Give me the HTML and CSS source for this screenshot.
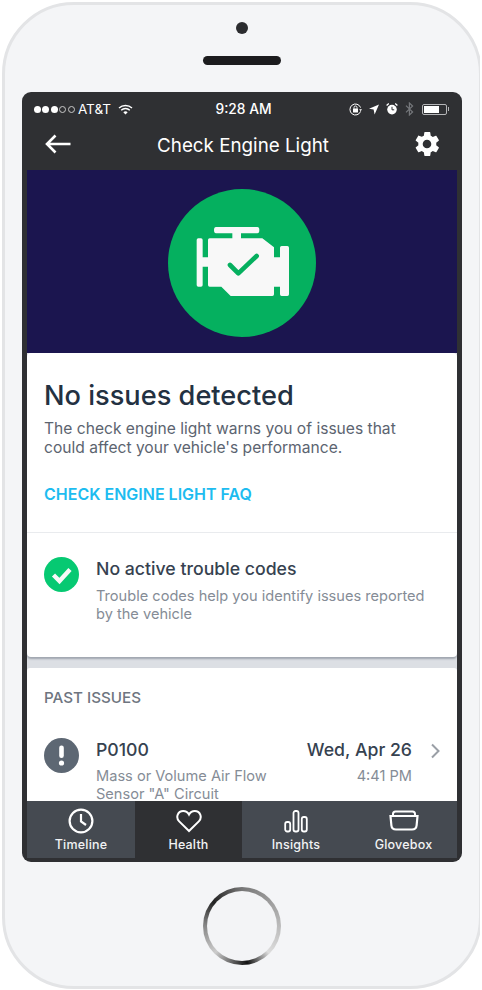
FILE: index.html
```html
<!DOCTYPE html>
<html lang="en-US">
<head>
    <meta charset="utf-8" />
    <title>Check Engine Light</title>
    <link rel="stylesheet" href="styles.css">
</head>
<body>
<div class="phone">
    <div class="camera"></div>
    <div class="speaker"></div>

    <div class="screen">
        <div class="statusbar">
            <div class="status-left">
                <span class="dot"></span><span class="dot"></span><span class="dot"></span><span class="dot hollow"></span><span class="dot hollow"></span>
                <span class="carrier">AT&amp;T</span>
                <svg class="wifi" width="15" height="11" viewBox="0 0 15 11">
                    <path d="M1 4 A9.5 9.5 0 0 1 14 4" fill="none" stroke="#fff" stroke-width="1.4"/>
                    <path d="M3.2 6.2 A6.2 6.2 0 0 1 11.8 6.2" fill="none" stroke="#fff" stroke-width="1.4"/>
                    <path d="M5.3 8.2 A3.2 3.2 0 0 1 9.7 8.2 L7.5 10.6 Z" fill="#fff"/>
                </svg>
            </div>
            <div class="status-time">9:28 AM</div>
            <div class="status-right">
                <svg width="13" height="13" viewBox="0 0 13 13">
                    <path d="M11.6 8.4 A5.5 5.5 0 1 1 11.6 4.6" fill="none" stroke="#fff" stroke-width="1"/>
                    <path d="M10.2 6.2 L13 6.2 L11.6 8.2 Z" fill="#fff"/>
                    <rect x="4" y="5.6" width="5" height="3.8" rx="0.5" fill="#fff"/>
                    <path d="M5 5.8 V4.5 A1.5 1.5 0 0 1 8 4.5 V5.8" fill="none" stroke="#fff" stroke-width="0.9"/>
                </svg>
                <svg width="10" height="11" viewBox="0 0 10 11">
                    <path d="M10 0.5 L5.6 10.5 L4.6 5.6 L0 4.8 Z" fill="#fff"/>
                </svg>
                <svg width="12" height="12" viewBox="0 0 12 12">
                    <circle cx="6" cy="6.6" r="4.8" fill="#fff"/>
                    <path d="M6 3.8 V6.8 H8.2" fill="none" stroke="#2f3033" stroke-width="1"/>
                    <path d="M0.6 2.6 L2.8 0.6 M11.4 2.6 L9.2 0.6" stroke="#fff" stroke-width="1.3"/>
                </svg>
                <svg width="9" height="14" viewBox="0 0 9 14">
                    <path d="M1 3.6 L7.6 10 L4.4 13 V1 L7.6 4 L1 10.4" fill="none" stroke="#75777b" stroke-width="1.2"/>
                </svg>
                <div class="battery"><div class="battery-level"></div></div>
            </div>
        </div>

        <div class="navbar">
            <svg class="nav-back" width="26" height="20" viewBox="0 0 26 20">
                <path d="M25.5 10 H2 M10.5 1.5 L2 10 L10.5 18.5" fill="none" stroke="#fff" stroke-width="2.6"/>
            </svg>
            <div class="nav-title">Check Engine Light</div>
            <svg class="nav-gear" width="24" height="24" viewBox="0 0 24 24">
                <path fill="#fff" fill-rule="evenodd" d="M21.2 13.2c.05-.4.08-.8.08-1.2s-.03-.8-.08-1.2l2.5-2c.23-.18.29-.5.14-.76l-2.4-4.1c-.14-.26-.46-.36-.72-.26l-3 1.2c-.62-.48-1.3-.88-2-1.18L15.27.5c-.05-.29-.3-.5-.59-.5H9.9c-.3 0-.54.21-.59.5l-.45 3.18c-.72.3-1.39.7-2 1.18l-3-1.2c-.27-.1-.58 0-.73.26L.74 8.04c-.15.26-.09.58.14.76l2.5 2c-.05.4-.09.8-.09 1.2s.04.8.09 1.2l-2.5 2c-.23.18-.29.5-.14.76l2.39 4.1c.15.26.46.36.73.26l3-1.2c.61.48 1.28.88 2 1.18l.45 3.18c.05.29.29.5.59.5h4.78c.3 0 .54-.21.59-.5l.45-3.18c.71-.3 1.38-.7 2-1.18l3 1.2c.26.1.58 0 .72-.26l2.4-4.1c.15-.26.09-.58-.14-.76zM12 16.3a4.3 4.3 0 1 1 0-8.6 4.3 4.3 0 0 1 0 8.6z"/>
            </svg>
        </div>

        <div class="content">
            <div class="hero">
                <svg width="148" height="148" viewBox="52 57 444 444">
                    <circle cx="274" cy="279" r="222" fill="#05b05f"/>
                    <path fill="#f8f8f8" d="M196 171 H320 Q326 171 326 180 Q326 190 320 190 H271 V205 H335 L370 232 V262 H388 V233 Q388 228 393 228 H410 Q415 228 415 233 V373 Q415 378 410 378 H393 Q388 378 388 373 V350 H370 V373 Q370 378 365 378 H240 L212 350 H177 Q172 350 172 345 V290 H156 V345 Q156 350 151 350 H143 Q138 350 138 345 V210 Q138 205 143 205 H151 Q156 205 156 210 V262 H172 V210 Q172 205 177 205 H245 V190 H196 Q190 190 190 180 Q190 171 196 171 Z"/>
                    <path d="M238 285 L263 310 L318 258" fill="none" stroke="#05b05f" stroke-width="14" stroke-linecap="round" stroke-linejoin="round"/>
                </svg>
            </div>

            <div class="card">
                <div class="card-top">
                    <h1 class="title">No issues detected</h1>
                    <p class="intro">The check engine light warns you of issues that could affect your vehicle's performance.</p>
                    <a class="faq">CHECK ENGINE LIGHT FAQ</a>
                </div>
                <div class="row status-row">
                    <svg class="row-icon" width="35" height="35" viewBox="0 0 35 35">
                        <circle cx="17.5" cy="17.5" r="17.5" fill="#06c972"/>
                        <path d="M9.5 18 L15.5 24 L26 12.5" fill="none" stroke="#f8f8f8" stroke-width="4.4"/>
                    </svg>
                    <div class="row-text">
                        <div class="row-title">No active trouble codes</div>
                        <div class="row-desc">Trouble codes help you identify issues reported by the vehicle</div>
                    </div>
                </div>
            </div>

            <div class="past">
                <div class="past-label">PAST ISSUES</div>
                <div class="row issue-row">
                    <svg class="row-icon" width="35" height="35" viewBox="0 0 35 35">
                        <circle cx="17.5" cy="17.5" r="17.5" fill="#5d6773"/>
                        <rect x="15.2" y="7.5" width="4.6" height="12.5" rx="2.2" fill="#fff"/>
                        <circle cx="17.5" cy="25" r="2.6" fill="#fff"/>
                    </svg>
                    <div class="row-text issue-text">
                        <div class="row-title">P0100</div>
                        <div class="row-desc">Mass or Volume Air Flow Sensor "A" Circuit</div>
                    </div>
                    <div class="issue-date">
                        <div class="row-title">Wed, Apr 26</div>
                        <div class="row-desc">4:41 PM</div>
                    </div>
                    <svg class="chevron" width="11" height="16" viewBox="0 0 11 16">
                        <path d="M3 1.5 L9.5 8 L3 14.5" fill="none" stroke="#9a9fa6" stroke-width="2"/>
                    </svg>
                </div>
            </div>
        </div>

        <div class="tabbar">
            <div class="tab">
                <svg width="26" height="26" viewBox="0 0 26 26">
                    <circle cx="13" cy="13" r="11.4" fill="none" stroke="#fff" stroke-width="2.2"/>
                    <path d="M13 6 V13.5 L18 17" fill="none" stroke="#fff" stroke-width="2.2"/>
                </svg>
                <span>Timeline</span>
            </div>
            <div class="tab active">
                <svg width="26" height="26" viewBox="0 0 26 26">
                    <path d="M13 23 L3.2 13.4 C-0.8 9 2 3 7.2 3 C9.8 3 11.8 4.4 13 6.6 C14.2 4.4 16.2 3 18.8 3 C24 3 26.8 9 22.8 13.4 Z" fill="none" stroke="#fff" stroke-width="2"/>
                </svg>
                <span>Health</span>
            </div>
            <div class="tab">
                <svg width="26" height="26" viewBox="0 0 26 26">
                    <rect x="2.2" y="14" width="5" height="9.5" rx="2" fill="none" stroke="#fff" stroke-width="1.8"/>
                    <rect x="10.5" y="3" width="5" height="20.5" rx="2" fill="none" stroke="#fff" stroke-width="1.8"/>
                    <rect x="18.8" y="9" width="5" height="14.5" rx="2" fill="none" stroke="#fff" stroke-width="1.8"/>
                </svg>
                <span>Insights</span>
            </div>
            <div class="tab">
                <svg width="30" height="26" viewBox="0 0 30 26">
                    <path d="M1.5 8 H28.5 L27.6 17.5 Q27.2 21.5 23 21.5 H7 Q2.8 21.5 2.4 17.5 Z" fill="none" stroke="#fff" stroke-width="2.2"/>
                    <path d="M4 7.5 V6 Q4 3.5 6.5 3.5 H23.5 Q26 3.5 26 6 V7.5" fill="none" stroke="#fff" stroke-width="2"/>
                </svg>
                <span>Glovebox</span>
            </div>
        </div>
    </div>

    <div class="home"><div class="home-inner"></div></div>
</div>
</body>
</html>
```

FILE: styles.css
```css
* {box-sizing: border-box;}
body {margin: 2px; font-family: "Inter", "Liberation Sans", sans-serif; background: #fff;}
h1, p {margin: 0;}

.phone {width: 480px; height: 987px; border: 3px solid #e3e4e6; border-radius: 72px; background: #f4f5f7; padding-top: 17px; display: flex; flex-direction: column; align-items: center;}
.camera {width: 12px; height: 12px; border-radius: 50%; background: #2b2c2f;}
.speaker {width: 78px; height: 9px; border-radius: 5px; background: #1c1c1e; margin-top: 22px;}
.home {width: 78px; height: 78px; border-radius: 50%; margin-top: 25px; padding: 4px; background: conic-gradient(#777 0deg, #bbb 90deg, #ddd 135deg, #111 172deg, #ccc 225deg, #888 270deg, #222 310deg, #777 360deg);}
.home-inner {width: 100%; height: 100%; border-radius: 50%; background: #f3f4f6;}

.screen {width: 440px; height: 770px; margin-top: 27px; background: #2f3033; border-radius: 9px; padding: 0 5px 4px; display: flex; flex-direction: column; overflow: hidden;}

.statusbar {height: 32px; padding: 2px 10px 0 7px; display: grid; grid-template-columns: 1fr auto 1fr; align-items: center; color: #fff; font-size: 13px;}
.status-left {display: flex; align-items: center;}
.dot {width: 7px; height: 7px; border-radius: 50%; background: #fff; margin-right: 1.4px;}
.dot.hollow {background: none; border: 1px solid #c9c9c9;}
.carrier {margin-left: 2px; font-size: 13.5px;}
.wifi {margin-left: 7px;}
.status-time {font-weight: 500; font-size: 13.8px; margin-left: 6px;}
.status-right {display: flex; align-items: center; justify-content: flex-end; gap: 7px;}
.battery {width: 25px; height: 11px; border: 1px solid #b5b6b8; border-radius: 2px; padding: 1px; position: relative; margin-left: 1px;}
.battery:after {content: ""; position: absolute; right: -3px; top: 2px; width: 1px; height: 4px; background: #b5b6b8;}
.battery-level {width: 15px; height: 100%; background: #fff;}

.navbar {height: 46px; display: flex; align-items: center; justify-content: space-between; padding: 0 18px 6px 18px;}
.nav-title {color: #fff; font-size: 18.8px; margin-top: 2px;}

.content {height: 631px; overflow: hidden; background: #dcdfe4;}
.hero {height: 183px; padding-top: 19px; background: #1b154f; display: flex; justify-content: center;}
.card {height: 304px; background: #fff; border-radius: 4px; box-shadow: 0 2px 2px rgba(70, 80, 95, 0.4);}
.card-top {padding: 24px 17px 28px; border-bottom: 1px solid #e9ebee;}
.title {font-size: 27.2px; font-weight: 500; line-height: 38px; color: #233142;}
.intro {font-size: 15.6px; line-height: 19px; color: #5c6470; margin-top: 4px;}
.faq {display: block; margin-top: 27px; font-size: 16px; font-weight: 600; line-height: 20px; color: #1dbcf0;}

.row {display: flex; padding: 0 17px;}
.row-icon {flex: none;}
.row-text {margin-left: 17px;}
.row-title {font-size: 17.7px; font-weight: 500; line-height: 24px; color: #364250;}
.row-desc {font-size: 14.6px; line-height: 18px; color: #858c96; margin-top: 5px;}
.status-row {padding-top: 24px;}
.status-row .row-desc {margin-top: 7px; line-height: 17.5px;}

.past {height: 133px; margin-top: 11px; background: #fff; border-radius: 3px 3px 0 0;}
.past-label {padding: 21px 17px 0; font-size: 15.2px; font-weight: 500; line-height: 18px; color: #6e7580;}
.issue-row {margin-top: 31px;}
.issue-text {width: 195px;}
.issue-date {margin-left: auto; text-align: right;}
.chevron {margin: 5px 0 0 17px;}

.tabbar {height: 57px; flex: none; background: #454a51; display: grid; grid-template-columns: 108px 107px 108px 107px;}
.tab {display: flex; flex-direction: column; align-items: center; padding-top: 7px; color: #f2f3f4; font-size: 12.5px; font-weight: 500; letter-spacing: 0.2px;}
.tab svg {height: 26px;}
.tab span {margin-top: 3px; line-height: 16px;}
.tab.active {background: #2f3033;}
```
